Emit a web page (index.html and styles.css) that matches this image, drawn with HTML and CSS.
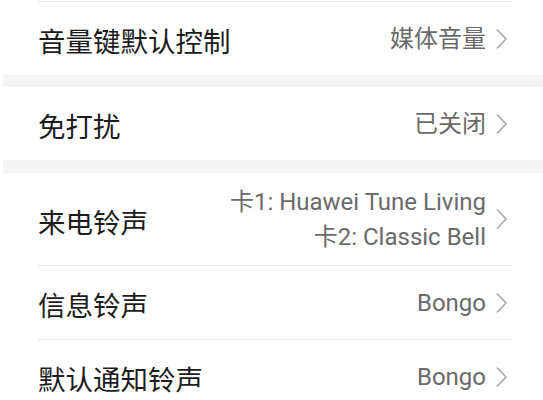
FILE: index.html
```html
<!DOCTYPE html>
<html lang="zh-CN">
<head>
<meta charset="utf-8">
<link rel="stylesheet" href="styles.css">
</head>
<body>
<div class="list">
  <div class="divider"></div>
  <div class="row">
    <span class="label">音量键默认控制</span>
    <span class="value">媒体音量</span>
    <svg class="chev" viewBox="0 0 12 20" width="12" height="20"><polyline points="1.5,1 10,10 1.5,19"/></svg>
  </div>
  <div class="gap"></div>
  <div class="row">
    <span class="label">免打扰</span>
    <span class="value">已关闭</span>
    <svg class="chev" viewBox="0 0 12 20" width="12" height="20"><polyline points="1.5,1 10,10 1.5,19"/></svg>
  </div>
  <div class="gap gap-b"></div>
  <div class="row row-tall">
    <span class="label">来电铃声</span>
    <span class="value multi"><span>卡1: Huawei Tune Living</span><span>卡2: Classic Bell</span></span>
    <svg class="chev" viewBox="0 0 12 20" width="12" height="20"><polyline points="1.5,1 10,10 1.5,19"/></svg>
  </div>
  <div class="divider"></div>
  <div class="row">
    <span class="label">信息铃声</span>
    <span class="value">Bongo</span>
    <svg class="chev" viewBox="0 0 12 20" width="12" height="20"><polyline points="1.5,1 10,10 1.5,19"/></svg>
  </div>
  <div class="divider"></div>
  <div class="row">
    <span class="label">默认通知铃声</span>
    <span class="value">Bongo</span>
    <svg class="chev" viewBox="0 0 12 20" width="12" height="20"><polyline points="1.5,1 10,10 1.5,19"/></svg>
  </div>
</div>
</body>
</html>
```
FILE: styles.css
```css
html, body {
  margin: 0;
  padding: 0;
  background: #ffffff;
}

.list {
  display: flex;
  flex-direction: column;
  padding-top: 1px;
}

.divider {
  height: 1px;
  margin: 0 31px 0 38px;
  background: #e8e8e8;
}

.gap {
  height: 12px;
  margin-left: 3px;
  background: #f4f4f4;
}

.gap-b {
  height: 13px;
}

.row {
  display: flex;
  align-items: center;
  height: 73px;
  padding: 0 35px 0 38px;
}

.row-tall {
  height: 92px;
}

.label {
  flex: 1;
  font-family: "Noto Sans CJK SC", sans-serif;
  font-size: 27.5px;
  line-height: 36px;
  color: #1c1c1c;
  padding-top: 3px;
}

.value {
  font-family: Roboto, "Noto Sans CJK SC", sans-serif;
  font-size: 24px;
  line-height: 35px;
  color: #6a6a6a;
  text-align: right;
  padding-top: 2px;
}

.multi {
  display: flex;
  flex-direction: column;
  align-items: flex-end;
}

.chev {
  margin-left: 10px;
  flex: none;
  fill: none;
  stroke: #a8a8a8;
  stroke-width: 1.7;
  stroke-linecap: round;
  stroke-linejoin: round;
}
```
